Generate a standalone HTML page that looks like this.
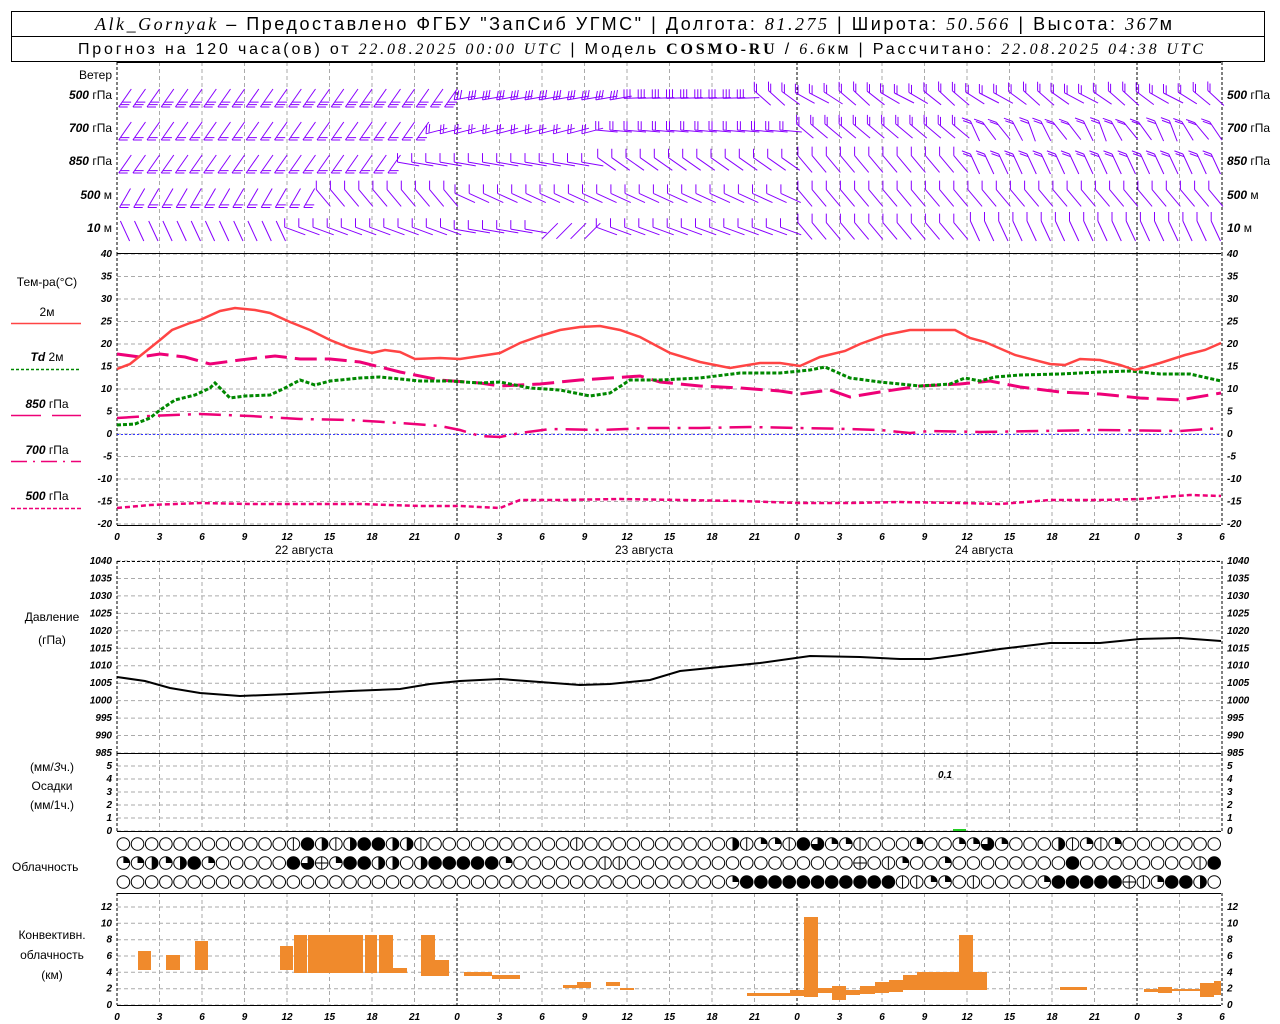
<!DOCTYPE html>
<html><head><meta charset="utf-8">
<style>
html,body{margin:0;padding:0;background:#fff;}
svg{display:block;}
text{font-family:"Liberation Sans","DejaVu Sans",sans-serif;}
.ax{font-family:"Liberation Sans",sans-serif;font-style:italic;font-size:10px;font-weight:bold;}
.lb{font-size:12px;fill:#000;}
</style></head>
<body>
<svg id="s" width="1280" height="1024" xmlns="http://www.w3.org/2000/svg">
<rect x="11.5" y="11.5" width="1253" height="50" fill="#fff" stroke="#000"/>
<line x1="11" y1="36.5" x2="1265" y2="36.5" stroke="#000"/>
<text x="95" y="30" font-size="18" textLength="1077" lengthAdjust="spacing"><tspan font-family="Liberation Serif" font-style="italic">Alk_Gornyak</tspan> – Предоставлено ФГБУ "ЗапСиб УГМС" | Долгота: <tspan font-family="Liberation Serif" font-style="italic">81.275</tspan> | Широта: <tspan font-family="Liberation Serif" font-style="italic">50.566</tspan> | Высота: <tspan font-family="Liberation Serif" font-style="italic">367</tspan>м</text>
<text x="78" y="54" font-size="16" textLength="1125" lengthAdjust="spacing">Прогноз на 120 часа(ов) от <tspan font-family="Liberation Serif" font-style="italic">22.08.2025 00:00 UTC</tspan>  | Модель <tspan font-family="Liberation Serif" font-weight="bold">COSMO-RU</tspan> / <tspan font-family="Liberation Serif" font-style="italic">6.6</tspan>км | Рассчитано: <tspan font-family="Liberation Serif" font-style="italic">22.08.2025 04:38 UTC</tspan></text>
<g id="g"></g>
</svg>
<script>
var G=document.getElementById('g'),out=[];
function X(h){return 117+h*340/24;}
function L(x1,y1,x2,y2,st){out.push('<line x1="'+x1+'" y1="'+y1+'" x2="'+x2+'" y2="'+y2+'" '+st+'/>');}
function T(x,y,s,cls,anch,extra){out.push('<text x="'+x+'" y="'+y+'" class="'+cls+'"'+(anch?' text-anchor="'+anch+'"':'')+(extra||'')+'>'+s+'</text>');}
function P(pts,st){out.push('<polyline fill="none" points="'+pts.map(function(p){return p[0]+','+p[1]}).join(' ')+'" '+st+'/>');}
var gray='stroke="#aaa" stroke-dasharray="4,3" stroke-width="1"';
var blk='stroke="#000" stroke-dasharray="3,2" stroke-width="1"';
var panels=[[62,253],[253,525],[561,753],[753,831],[893,1005]];
function hgrid(y0,y1,step){for(var y=y0;y<=y1+0.1;y+=step){L(117,y.toFixed(1),1221,y.toFixed(1),gray);}}
hgrid(254,524,22.5);hgrid(561,753,17.45);hgrid(766,831,13);hgrid(907,1005,16.33);
panels.forEach(function(p){for(var h=0;h<=78;h+=3){var x=X(h).toFixed(1);var day=(h%24==0)||h==78;L(x,p[0],x,p[1],day?blk:gray);}});
[[62],[253],[525],[753],[831],[893],[1005]].forEach(function(a){L(117,a[0]+.5,1221,a[0]+.5,'stroke="#000"');});
L(117,561.5,1221,561.5,'stroke="#000" stroke-dasharray="3,2"');
for(var v=40;v>=-20;v-=5){var y=254+(40-v)*4.5+3;T(112,y,v,'ax','end');T(1227,y,v,'ax');}
for(var v=1040;v>=985;v-=5){var y=561+(1040-v)*3.49+3;T(112,y.toFixed(1),v,'ax','end');T(1227,y.toFixed(1),v,'ax');}
for(var v=0;v<=5;v++){var y=831-13*v+3;T(112,y,v,'ax','end');T(1227,y,v,'ax');}
for(var v=0;v<=12;v+=2){var y=1005-8.17*v+3;T(112,y.toFixed(1),v,'ax','end');T(1227,y.toFixed(1),v,'ax');}
for(var h=0;h<=78;h+=3){var x=X(h);T(x,540,h%24,'ax" font-size="14','middle');T(x,1020,h%24,'ax" font-size="14','middle');}
T(304,554,'22 августа','lb" font-size="13','middle');T(644,554,'23 августа','lb" font-size="13','middle');T(984,554,'24 августа','lb" font-size="13','middle');
T(112,79,'Ветер','lb" font-size="12','end');
var wl=[['500','гПа',95],['700','гПа',128],['850','гПа',161],['500','м',195],['10','м',228]];
wl.forEach(function(w){T(112,w[2]+4,'<tspan font-style="italic" font-weight="bold">'+w[0]+'</tspan>  '+w[1],'lb" font-size="10','end');T(1227,w[2]+4,'<tspan font-style="italic" font-weight="bold">'+w[0]+'</tspan>  '+w[1],'lb" font-size="10');});
T(47,286,'Тем-ра(°С)','lb" font-size="13','middle');
T(47,316,'2м','lb" font-size="11','middle');L(11,323.5,81,323.5,'stroke="#f44" stroke-width="1.5"');
T(47,361,'<tspan font-style="italic" font-weight="bold">Td</tspan>  2м','lb" font-size="11','middle');L(11,369.5,81,369.5,'stroke="#080" stroke-width="1.5" stroke-dasharray="3,2"');
T(47,408,'<tspan font-style="italic" font-weight="bold">850</tspan>  гПа','lb" font-size="11','middle');L(11,415.5,41,415.5,'stroke="#e07" stroke-width="1.5"');L(52,415.5,81,415.5,'stroke="#e07" stroke-width="1.5"');
T(47,454,'<tspan font-style="italic" font-weight="bold">700</tspan>  гПа','lb" font-size="11','middle');L(11,461.5,81,461.5,'stroke="#e07" stroke-width="1.5" stroke-dasharray="16,6,2,6"');
T(47,500,'<tspan font-style="italic" font-weight="bold">500</tspan>  гПа','lb" font-size="11','middle');L(11,508.5,81,508.5,'stroke="#e07" stroke-width="1.5" stroke-dasharray="4,2"');
T(52,621,'Давление','lb" font-size="13','middle');T(52,644,'(гПа)','lb" font-size="13','middle');
T(52,771,'(мм/<tspan font-style="italic">3</tspan>ч.)','lb" font-size="13','middle');T(52,790,'Осадки','lb" font-size="13','middle');T(52,809,'(мм/1ч.)','lb" font-size="13','middle');
T(12,871,'Облачность','lb" font-size="13');
T(52,939,'Конвективн.','lb" font-size="13','middle');T(52,959,'облачность','lb" font-size="13','middle');T(52,979,'(км)','lb" font-size="13','middle');
T(945,778,'0.1','ax" font-size="12','middle');
out.push('<rect x="953" y="829" width="13" height="2" fill="#2c2"/>');
L(117,434.5,1221,434.5,'stroke="#33f" stroke-dasharray="2,2"');
P([[117,418],[150,416],[200,414],[250,416],[300,419],[350,420],[400,423],[440,426],[460,430],[480,436],[500,437],[520,433],[550,429],[600,430],[650,428],[700,428],[750,427],[800,428],[850,429],[880,430],[910,433],[930,431],[980,432],[1040,431],[1100,430],[1180,431],[1221,428]],'stroke="#e07" stroke-width="2.5" stroke-dasharray="22,8,3,8"');
P([[117,508],[150,505],[200,503],[250,504],[300,504],[360,504],[420,506],[460,506],[500,508],[520,500],[560,500],[620,499],[680,500],[740,501],[800,503],[850,503],[900,502],[960,503],[1000,504],[1050,500],[1100,500],[1140,499],[1190,495],[1221,496]],'stroke="#e07" stroke-width="2.5" stroke-dasharray="5,3"');
P([[117,354],[140,357],[160,354],[185,357],[210,364],[240,360],[275,356],[300,359],[330,359],[360,362],[400,372],[440,380],[480,383],[500,386],[540,384],[580,380],[610,378],[640,376],[660,382],[700,386],[740,388],[780,391],[800,394],[830,390],[850,397],[880,392],[920,386],[960,384],[990,381],[1020,387],[1060,392],[1100,394],[1140,398],[1180,400],[1221,393]],'stroke="#e07" stroke-width="3" stroke-dasharray="22,8"');
P([[117,425],[135,424],[150,418],[160,410],[175,400],[195,395],[210,388],[215,383],[222,390],[230,398],[245,396],[270,395],[285,388],[300,380],[315,385],[330,381],[360,378],[380,377],[420,381],[450,381],[480,383],[500,382],[530,388],[560,390],[590,396],[610,393],[630,380],[660,380],[700,378],[740,373],[780,373],[810,370],[825,367],[850,378],[880,382],[920,386],[950,384],[965,378],[980,381],[995,377],[1020,375],[1060,374],[1100,372],[1130,371],[1160,374],[1190,374],[1221,381]],'stroke="#080" stroke-width="3" stroke-dasharray="4,2"');
P([[117,369],[130,364],[145,352],[160,340],[172,330],[190,323],[200,320],[220,311],[235,308],[255,310],[270,313],[290,322],[310,330],[330,340],[350,348],[372,353],[385,350],[400,352],[415,359],[440,358],[460,359],[480,356],[500,353],[520,343],[540,336],[560,330],[580,327],[600,326],[620,330],[640,337],[670,353],[700,362],[730,368],[760,363],[780,363],[800,366],[820,357],[845,351],[860,344],[885,335],[910,330],[935,330],[955,330],[970,338],[985,342],[1015,355],[1050,364],[1065,365],[1080,359],[1100,360],[1120,365],[1135,370],[1160,363],[1185,355],[1205,350],[1221,343]],'stroke="#f44" stroke-width="2.5"');
P([[117,677],[145,681],[170,688],[200,693],[240,696],[290,694],[350,691],[400,689],[430,684],[460,681],[500,679],[540,682],[580,685],[610,684],[650,680],[680,671],[720,667],[760,663],[810,656],[860,657],[900,659],[930,659],[960,655],[1000,649],[1050,643],[1100,643],[1140,639],[1180,638],[1221,641]],'stroke="#000" stroke-width="2"');
var bars=[[138,151,951,970],[166,180,955,970],[195,208,941,970],[280,293,946,970],[294,307,935,973],[308,336,935,973],[336,363,935,973],[365,377,935,973],[379,393,935,973],[393,407,968,973],[421,435,935,976],[435,449,960,976],[464,492,972,976],[492,520,975,979],[563,577,985,988],[577,591,982,988],[606,620,982,986],[620,634,988,990],[747,790,993,996],[790,804,990,996],[804,818,917,997],[818,832,988,993],[832,846,986,1000],[846,860,990,995],[860,875,986,994],[875,889,982,993],[889,903,980,992],[903,917,975,990],[917,959,972,990],[959,973,935,990],[973,987,972,990],[1060,1087,987,990],[1144,1158,989,992],[1158,1172,987,993],[1172,1200,989,991],[1200,1214,983,997],[1214,1221,981,995]];
bars.forEach(function(b){out.push('<rect x="'+b[0]+'" y="'+b[2]+'" width="'+(b[1]-b[0])+'" height="'+(b[3]-b[2])+'" fill="#f08a2c"/>');});
var rows=[
"oooooooooooo"+"vfhvhffhhv"+"oooooooooo"+"v"+"oooooooooo"+"hvqqvftqqv"+"ooo"+"q"+"oo"+"qqtq"+"ooo"+"hvqvq"+"ooooooo",
"qqhqhfqooooo"+"ftcqffhhoh"+"fffffq"+"oooooo"+"vv"+"oooooooooooooooo"+"covqooq"+"oooooooo"+"f"+"oooooooo"+"vf",
"ooooooooooooooooooooooooooooooooooooooooooo"+"q"+"fffffffffff"+"vvqqov"+"oooo"+"q"+"fffff"+"cvq"+"ffh"];
var ry=[844,863,882];
rows.forEach(function(r,i){for(var k=0;k<78;k++){var c=r[k]||'o';var cx=X(k+0.45),cy=ry[i],R=6.3;var s='';
 if(c=='f')s='<circle cx="'+cx+'" cy="'+cy+'" r="'+R+'" fill="#000" stroke="#000"/>';
 else{s='<circle cx="'+cx+'" cy="'+cy+'" r="'+R+'" fill="#fff" stroke="#000"/>';
  if(c=='h')s+='<path d="M'+cx+' '+(cy-R)+'A'+R+' '+R+' 0 0 1 '+cx+' '+(cy+R)+'Z" fill="#000"/>';
  if(c=='v'||c=='c')s+='<line x1="'+cx+'" y1="'+(cy-R)+'" x2="'+cx+'" y2="'+(cy+R)+'" stroke="#000"/>';
  if(c=='c')s+='<line x1="'+(cx-R)+'" y1="'+cy+'" x2="'+(cx+R)+'" y2="'+cy+'" stroke="#000"/>';
  if(c=='q')s+='<path d="M'+cx+' '+cy+'L'+cx+' '+(cy-R)+'A'+R+' '+R+' 0 0 1 '+(cx+R)+' '+cy+'Z" fill="#000"/>';
  if(c=='t')s+='<path d="M'+cx+' '+cy+'L'+cx+' '+(cy-R)+'A'+R+' '+R+' 0 1 1 '+(cx-R)+' '+cy+'Z" fill="#000"/>';}
 out.push(s);}});
var wy=[95,128,161,195,228];
function seg(r,h){
 if(r==0){if(h<24)return[125,0,3];if(h<36)return[170,280,3];if(h<45)return[178,270,3];return[215+8*Math.sin(h),270,2];}
 if(r==1){if(h<22)return[125,0,2];if(h<34)return[165,275,2];if(h<48)return[185,270,2];if(h<60)return[220,270,2];return[240+10*Math.sin(h*1.3),200,2];}
 if(r==2){if(h<20)return[125,0,2];if(h<34)return[190,270,1];if(h<48)return[215,270,1];if(h<60)return[230,270,1];return[245,200,2];}
 if(r==3){if(h<14)return[120,0,2];if(h<24)return[230,270,1];if(h<48)return[205,270,1];return[230,270,1];}
 if(h<12)return[65,0,0];if(h<24)return[200,270,1];if(h<30)return[190,270,1];if(h<34)return[135,0,0];if(h<48)return[200,270,1];if(h<60)return[230,270,1];return[245,270,1];}
var wp=[];
for(var r=0;r<5;r++)for(var h=0;h<78;h++){var s=seg(r,h),a=s[0]*Math.PI/180,len=22;
 var dx=Math.cos(a)*len,dy=Math.sin(a)*len;var sx=X(h)+8-dx/2,sy=wy[r]+3-dy/2;
 var ex=sx+dx,ey=sy+dy;wp.push('M'+sx.toFixed(1)+' '+sy.toFixed(1)+'L'+ex.toFixed(1)+' '+ey.toFixed(1));
 var b=s[1]*Math.PI/180;for(var k=0;k<s[2];k++){var px=ex-Math.cos(a)*3*k,py=ey-Math.sin(a)*3*k;
 wp.push('M'+px.toFixed(1)+' '+py.toFixed(1)+'l'+(Math.cos(b)*9).toFixed(1)+' '+(Math.sin(b)*9).toFixed(1));}}
out.push('<path d="'+wp.join('')+'" stroke="#80f" stroke-width="1" fill="none"/>');
G.innerHTML=out.join('');
</script>
</body></html>
